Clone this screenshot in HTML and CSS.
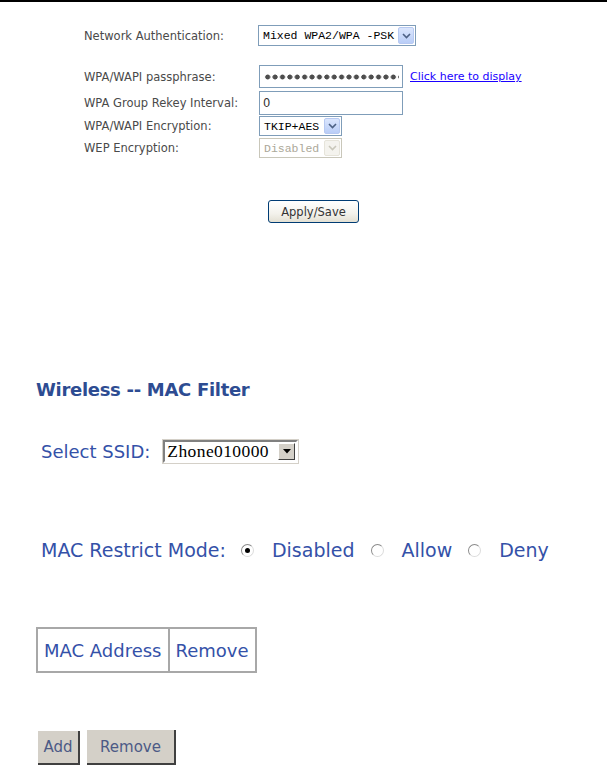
FILE: index.html
```html
<!DOCTYPE html>
<html lang="en">
<head>
    <meta charset="UTF-8">
    <title>Wireless -- Security / MAC Filter</title>
    <link rel="stylesheet" href="styles.css">
</head>
<body>
    <div class="topline"></div>

    <!-- WPA settings -->
    <div class="security">
        <div class="row row-auth">
            <span class="label">Network Authentication:</span>
            <div class="combo combo-auth">
                <span class="value">Mixed WPA2/WPA -PSK</span>
                <span class="arrow"><svg width="9" height="6" viewBox="0 0 9 6"><path d="M1 1l3.5 3.5L8 1" fill="none" stroke="#4d6185" stroke-width="1.6"/></svg></span>
            </div>
        </div>
        <div class="row row-pass">
            <span class="label">WPA/WAPI passphrase:</span>
            <div class="textbox pass"><span class="dots"></span></div>
            <a class="show" href="javascript:;">Click here to display</a>
        </div>
        <div class="row row-rekey">
            <span class="label">WPA Group Rekey Interval:</span>
            <div class="textbox rekey">0</div>
        </div>
        <div class="row row-enc">
            <span class="label">WPA/WAPI Encryption:</span>
            <div class="combo combo-small">
                <span class="value">TKIP+AES</span>
                <span class="arrow"><svg width="9" height="6" viewBox="0 0 9 6"><path d="M1 1l3.5 3.5L8 1" fill="none" stroke="#4d6185" stroke-width="1.6"/></svg></span>
            </div>
        </div>
        <div class="row row-wep">
            <span class="label">WEP Encryption:</span>
            <div class="combo combo-small disabled">
                <span class="value">Disabled</span>
                <span class="arrow"><svg width="9" height="6" viewBox="0 0 9 6"><path d="M1 1l3.5 3.5L8 1" fill="none" stroke="#c9c7ba" stroke-width="1.6"/></svg></span>
            </div>
        </div>
        <div class="apply-wrap">
            <button class="xp-btn" type="button">Apply/Save</button>
        </div>
    </div>

    <!-- MAC filter -->
    <div class="macfilter">
        <h2 class="title">Wireless -- MAC Filter</h2>

        <div class="ssid-row">
            <span>Select SSID:</span>
            <div class="classic-select">
                <span class="value">Zhone010000</span>
                <span class="btn"><svg width="8" height="5" viewBox="0 0 8 5"><path d="M0 0h8L4 4.5z" fill="#000"/></svg></span>
            </div>
        </div>

        <div class="mode-row">
            <span class="mode-label">MAC Restrict Mode:</span>
            <span class="radio checked"></span><span class="opt">Disabled</span>
            <span class="radio"></span><span class="opt">Allow</span>
            <span class="radio"></span><span class="opt">Deny</span>
        </div>

        <table class="mac-table">
            <tr>
                <td>MAC Address</td>
                <td>Remove</td>
            </tr>
        </table>

        <div class="actions">
            <button class="gray-btn add" type="button">Add</button>
            <button class="gray-btn remove" type="button">Remove</button>
        </div>
    </div>
</body>
</html>
```

FILE: styles.css
```css
* {
    margin: 0;
    padding: 0;
    box-sizing: border-box;
}
body {
    background: #fff;
    font-family: "DejaVu Sans", Verdana, sans-serif;
}
.topline {
    height: 2px;
    background: #000;
}

/* top form */
.security {
    padding-left: 84px;
    font-size: 11.5px;
    color: #4a4a4a;
}
.row {
    display: flex;
    align-items: center;
}
.label {
    width: 174px;
    flex: none;
}
.row-auth {
    margin-top: 23px;
}
.row-pass {
    margin-top: 19px;
}
.row-rekey {
    margin-top: 3px;
}
.row-enc {
    margin-top: 1px;
}
.row-wep {
    margin-top: 2px;
}
.combo {
    display: flex;
    align-items: center;
    height: 21px;
    border: 1px solid #7f9db9;
    background: #fff;
    font-family: "Liberation Mono", monospace;
    font-size: 11.5px;
    color: #000;
    padding: 1px;
}
.combo .value {
    flex: 1;
    padding-left: 3px;
    white-space: nowrap;
}
.combo .arrow {
    width: 16px;
    height: 100%;
    display: flex;
    align-items: center;
    justify-content: center;
    background: linear-gradient(#dbe6fd, #b9cdf7);
    border: 1px solid #b7c9f1;
    border-radius: 2px;
}
.combo-auth {
    width: 158px;
}
.combo-small {
    width: 83px;
    height: 20px;
    margin-left: 1px;
}
.combo.disabled {
    border-color: #c9c7ba;
    color: #aca899;
}
.combo.disabled .arrow {
    background: #f4f3ee;
    border-color: #e6e4da;
}
.textbox {
    width: 144px;
    height: 23px;
    margin-left: 1px;
    border: 1px solid #7f9db9;
    background: #fff;
    padding: 0 3px;
    display: flex;
    align-items: center;
    color: #333;
    overflow: hidden;
}
.textbox.rekey {
    height: 24px;
}
.dots {
    display: block;
    width: 100%;
    height: 6px;
    margin-left: 1px;
    background: radial-gradient(circle, #4d4d4d 2.2px, transparent 2.8px) 0 0 / 7.4px 6px repeat-x;
}
.show {
    margin-left: 7px;
    font-size: 11px;
    color: #1a00ff;
    text-decoration: underline;
}
.apply-wrap {
    padding: 42px 0 0 184px;
}
.xp-btn {
    width: 91px;
    height: 23px;
    border: 1px solid #003c74;
    border-radius: 3px;
    background: linear-gradient(#fff, #f3f2ec 60%, #e3e0d3);
    font-family: "DejaVu Sans", Verdana, sans-serif;
    font-size: 11.5px;
    color: #333;
}

/* MAC filter */
.macfilter {
    padding-left: 36px;
    color: #3451a8;
}
.title {
    margin-top: 156px;
    font-size: 18px;
    font-weight: bold;
    color: #2d4c92;
    letter-spacing: -0.3px;
}
.ssid-row {
    display: flex;
    align-items: center;
    margin-top: 40px;
    padding-left: 5px;
    font-size: 18px;
}
.classic-select {
    display: flex;
    align-items: center;
    width: 135px;
    height: 23px;
    margin-left: 13px;
    border: 2px solid;
    border-color: #808080 #fff #fff #808080;
    outline: 1px solid #d4d0c8;
    background: #fff;
    font-family: "Liberation Serif", serif;
    font-size: 17.5px;
    color: #000;
}
.classic-select .value {
    flex: 1;
    padding-left: 2px;
    letter-spacing: 0.4px;
}
.classic-select .btn {
    width: 17px;
    height: 17px;
    margin-right: 1px;
    display: flex;
    align-items: center;
    justify-content: center;
    background: #d4d0c8;
    border: 1px solid;
    border-color: #fff #404040 #404040 #fff;
}
.mode-row {
    display: flex;
    align-items: center;
    margin-top: 76px;
    padding-left: 5px;
    font-size: 19px;
}
.mode-label {
    margin-right: 15px;
}
.radio {
    width: 13px;
    height: 13px;
    border-radius: 50%;
    border: 1px solid #8a8a8a;
    border-right-color: #dcdcdc;
    border-bottom-color: #dcdcdc;
    background: #fff;
    position: relative;
    margin-right: 18px;
}
.radio.checked::after {
    content: "";
    position: absolute;
    left: 3px;
    top: 3px;
    width: 5px;
    height: 5px;
    border-radius: 50%;
    background: #000;
}
.opt {
    margin-right: 16px;
}
.mac-table {
    margin-top: 66px;
    border: 2px solid #a8a8a8;
    border-collapse: collapse;
    font-size: 18px;
}
.mac-table td {
    height: 44px;
    padding: 0 6px;
    border: 2px solid #a8a8a8;
    background: #fff;
}
.actions {
    display: flex;
    align-items: flex-end;
    gap: 7px;
    margin-top: 57px;
    padding-left: 2px;
}
.gray-btn {
    height: 34px;
    border: none;
    border-right: 2px solid #404040;
    border-bottom: 2px solid #404040;
    background: #d4d0c8;
    font-family: "DejaVu Sans", Verdana, sans-serif;
    font-size: 15px;
    color: #4c5a86;
}
.gray-btn.add {
    width: 42px;
}
.gray-btn.remove {
    width: 89px;
    height: 35px;
}
```
